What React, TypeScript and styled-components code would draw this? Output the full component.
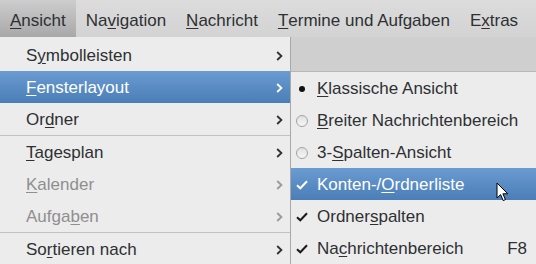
import styled, { createGlobalStyle } from 'styled-components';

interface MenuEntry {
  label: string;
  mn: number;
  disabled?: boolean;
  active?: boolean;
  sep?: boolean;
}

interface SubEntry {
  label: string;
  mn: number;
  mark: 'bullet' | 'radio' | 'check';
  active?: boolean;
  accel?: string;
}

const topMenus: [string, number][] = [
  ['Ansicht', 0],
  ['Navigation', 2],
  ['Nachricht', 0],
  ['Termine und Aufgaben', 0],
  ['Extras', 1],
];

const viewMenu: MenuEntry[] = [
  { label: 'Symbolleisten', mn: 1 },
  { label: 'Fensterlayout', mn: 0, active: true },
  { label: 'Ordner', mn: 2 },
  { label: '', mn: -1, sep: true },
  { label: 'Tagesplan', mn: 0 },
  { label: 'Kalender', mn: 0, disabled: true },
  { label: 'Aufgaben', mn: 5, disabled: true },
  { label: '', mn: -1, sep: true },
  { label: 'Sortieren nach', mn: 2 },
];

const layoutMenu: SubEntry[] = [
  { label: 'Klassische Ansicht', mn: 0, mark: 'bullet' },
  { label: 'Breiter Nachrichtenbereich', mn: 0, mark: 'radio' },
  { label: '3-Spalten-Ansicht', mn: 2, mark: 'radio' },
  { label: 'Konten-/Ordnerliste', mn: 8, mark: 'check', active: true },
  { label: 'Ordnerspalten', mn: 6, mark: 'check' },
  { label: 'Nachrichtenbereich', mn: 2, mark: 'check', accel: 'F8' },
];

const GlobalStyle = createGlobalStyle`
  html, body {
    margin: 0;
    padding: 0;
    background: #cfcfcf;
    overflow: hidden;
  }
  body {
    font-family: "Liberation Sans", Arial, sans-serif;
    font-size: 17px;
    color: #2e3033;
  }
`;

const Screen = styled.div`
  width: 536px;
  height: 264px;
  position: relative;
  overflow: hidden;
`;

const MenuBar = styled.div`
  display: flex;
  height: 37px;
  background: linear-gradient(#dcdcdc, #d3d3d3);
`;

const BarItem = styled.div<{ open?: boolean }>`
  display: flex;
  align-items: center;
  padding: 5px 10px 0;
  box-sizing: border-box;
  background: ${p => (p.open ? 'linear-gradient(#cdcdcd, #a8a8a8)' : 'transparent')};
`;

const Body = styled.div`
  display: flex;
  align-items: flex-start;
`;

const Menu = styled.div`
  width: 290px;
  padding-top: 2px;
  background: #ececec;
  border-right: 1px solid #a9a9a9;
  display: flex;
  flex-direction: column;
  height: 240px;
`;

const Row = styled.div<{ active?: boolean; disabled?: boolean }>`
  display: flex;
  align-items: center;
  flex-shrink: 0;
  box-sizing: border-box;
  height: 32px;
  padding: 2px 7px 0 26px;
  color: ${p => (p.active ? '#ffffff' : p.disabled ? '#8f8f8f' : '#2e3033')};
  background: ${p => (p.active ? 'linear-gradient(#6a9bd1, #4b7eb7)' : 'transparent')};
`;

const Label = styled.span`
  flex: 1;
  white-space: nowrap;
`;

const Mn = styled.u`
  text-decoration-thickness: 1px;
  text-underline-offset: 2px;
`;

const Separator = styled.div`
  height: 1px;
  flex-shrink: 0;
  background: #c2c2c2;
`;

const Side = styled.div`
  flex: 1;
  display: flex;
  flex-direction: column;
`;

const Strip = styled.div`
  height: 34px;
  background: #cfcfcf;
`;

const SubMenu = styled.div`
  background: #ececec;
  border-top: 1px solid #b8b8b8;
  display: flex;
  flex-direction: column;
`;

const SubRow = styled.div<{ active?: boolean }>`
  display: flex;
  align-items: center;
  box-sizing: border-box;
  height: 32px;
  padding: 2px 9px 0 4px;
  color: ${p => (p.active ? '#ffffff' : '#2e3033')};
  background: ${p => (p.active ? 'linear-gradient(#6a9bd1, #4b7eb7)' : 'transparent')};
`;

const MarkBox = styled.span`
  width: 14px;
  height: 14px;
  margin-right: 8px;
  display: flex;
  align-items: center;
  justify-content: center;
  flex-shrink: 0;
`;

const Bullet = styled.span`
  width: 6px;
  height: 6px;
  border-radius: 50%;
  background: #111;
`;

const Radio = styled.span`
  width: 10px;
  height: 10px;
  border-radius: 50%;
  border: 1px solid #a4a4a4;
  background: linear-gradient(#e0e0e0, #f6f6f6);
`;

const Accel = styled.span`
  margin-left: auto;
`;

const Pointer = styled.svg`
  position: absolute;
  left: 496px;
  top: 182px;
`;

const underline = (text: string, idx: number) =>
  idx < 0 ? (
    text
  ) : (
    <>
      {text.slice(0, idx)}
      <Mn>{text[idx]}</Mn>
      {text.slice(idx + 1)}
    </>
  );

const Chevron = ({ color }: { color: string }) => (
  <svg width="7" height="10" viewBox="0 0 7 10">
    <path d="M1.2 1 L5.4 5 L1.2 9" fill="none" stroke={color} strokeWidth="1.8" />
  </svg>
);

const Check = ({ color }: { color: string }) => (
  <svg width="12" height="10" viewBox="0 0 12 10">
    <path d="M1 5.2 L4.3 8.3 L11 1.2" fill="none" stroke={color} strokeWidth="2" />
  </svg>
);

const App = () => (
  <Screen>
    <GlobalStyle />
    <MenuBar>
      {topMenus.map(([label, mn], i) => (
        <BarItem key={label} open={i === 0}>
          {underline(label, mn)}
        </BarItem>
      ))}
    </MenuBar>
    <Body>
      <Menu>
        {viewMenu.map((item, i) =>
          item.sep ? (
            <Separator key={i} />
          ) : (
            <Row key={i} active={item.active} disabled={item.disabled}>
              <Label>{underline(item.label, item.mn)}</Label>
              <Chevron color={item.active ? '#ffffff' : item.disabled ? '#9a9a9a' : '#2e3033'} />
            </Row>
          )
        )}
      </Menu>
      <Side>
        <Strip />
        <SubMenu>
          {layoutMenu.map(item => (
            <SubRow key={item.label} active={item.active}>
              <MarkBox>
                {item.mark === 'bullet' && <Bullet />}
                {item.mark === 'radio' && <Radio />}
                {item.mark === 'check' && <Check color={item.active ? '#ffffff' : '#1a1a1a'} />}
              </MarkBox>
              <Label>{underline(item.label, item.mn)}</Label>
              {item.accel && <Accel>{item.accel}</Accel>}
            </SubRow>
          ))}
        </SubMenu>
      </Side>
    </Body>
    <Pointer width="14" height="21" viewBox="0 0 14 21">
      <path
        d="M1 1 L1 16 L4.6 12.6 L7.2 18.6 L9.4 17.6 L6.9 11.8 L11.8 11.8 Z"
        fill="#ffffff"
        stroke="#000000"
        strokeWidth="1"
        strokeLinejoin="round"
      />
    </Pointer>
  </Screen>
);

export default App;
